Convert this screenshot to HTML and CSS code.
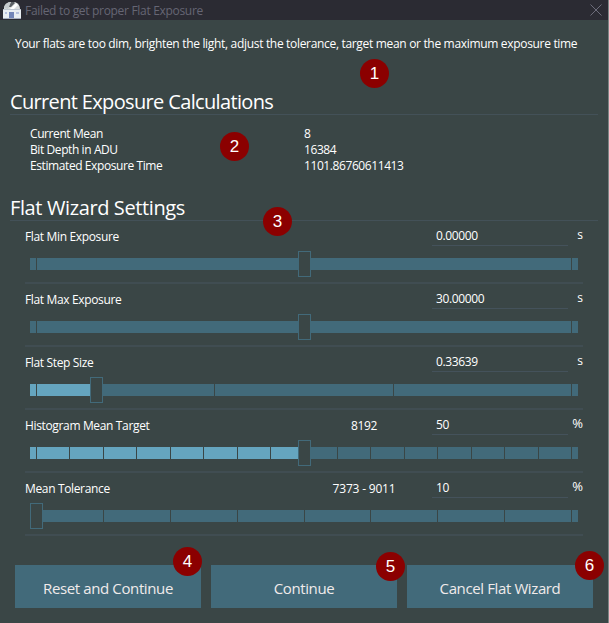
FILE: index.html
```html
<!DOCTYPE html>
<html lang="en">
<head>
<meta charset="utf-8">
<title>Failed to get proper Flat Exposure</title>
<link rel="stylesheet" href="styles.css">
</head>
<body>
<div class="window">
  <header class="titlebar">
    <svg class="app-icon" width="18" height="19" viewBox="0 0 18 19">
      <path d="M1 9V6Q2 2 7 1H12Q17 3 17 8V9Z" fill="#d9dcdd"/>
      <path d="M1 7Q2 3 6 1L8 3L5 8Z" fill="#c5c9cd"/>
      <path d="M7 8L13 2L15 4L11 8Z" fill="#fff"/>
      <path d="M8 1L11 1L12 2L8 6H6Z" fill="#5c6065"/>
      <path d="M0 8H18V18H0Z" fill="#e9edf2"/>
      <path d="M0 8H18V9H0Z" fill="#bfc6d0"/>
      <path d="M6 11H11V17H6Z" fill="#7385b8"/>
      <path d="M2 11H4V13H2ZM13 11H16V13H13Z" fill="#b6c1df"/>
      <path d="M0 17H18V18H0Z" fill="#a5acbd"/>
    </svg>
    <h1 class="title">Failed to get proper Flat Exposure</h1>
    <svg class="close" width="12" height="12" viewBox="0 0 12 12"><path d="M.5 .5L11.5 11.5M11.5 .5L.5 11.5" stroke="#6c6c7a" fill="none"/></svg>
  </header>

  <p class="message">Your flats are too dim, brighten the light, adjust the tolerance, target mean or the maximum exposure time</p>

  <h2 class="heading calc-heading">Current Exposure Calculations</h2>
  <dl class="facts">
    <dt>Current Mean</dt><dd>8</dd>
    <dt>Bit Depth in ADU</dt><dd>16384</dd>
    <dt>Estimated Exposure Time</dt><dd>1101.86760611413</dd>
  </dl>

  <h2 class="heading wizard-heading">Flat Wizard Settings</h2>
  <section class="settings">
    <div class="row">
      <div class="fields"><span class="label">Flat Min Exposure</span><span class="range"></span><span class="input">0.00000</span><span class="unit">s</span></div>
      <div class="slider"><div class="ticks"><i></i><i></i></div><b class="thumb" style="left:268px"></b></div>
    </div>
    <div class="row">
      <div class="fields"><span class="label">Flat Max Exposure</span><span class="range"></span><span class="input">30.00000</span><span class="unit">s</span></div>
      <div class="slider"><div class="ticks"><i></i><i></i></div><b class="thumb" style="left:268px"></b></div>
    </div>
    <div class="row">
      <div class="fields"><span class="label">Flat Step Size</span><span class="range"></span><span class="input">0.33639</span><span class="unit">s</span></div>
      <div class="slider"><div class="fill" style="width:60px"></div><div class="ticks"><i></i><i></i><i></i><i></i></div><b class="thumb" style="left:60px"></b></div>
    </div>
    <div class="row">
      <div class="fields"><span class="label">Histogram Mean Target</span><span class="range">8192</span><span class="input">50</span><span class="unit percent">%</span></div>
      <div class="slider"><div class="fill" style="width:268px"></div><div class="ticks"><i></i><i></i><i></i><i></i><i></i><i></i><i></i><i></i><i></i><i></i><i></i><i></i><i></i><i></i><i></i><i></i><i></i></div><b class="thumb" style="left:268px"></b></div>
    </div>
    <div class="row">
      <div class="fields"><span class="label">Mean Tolerance</span><span class="range span">7373 - 9011</span><span class="input">10</span><span class="unit percent">%</span></div>
      <div class="slider"><div class="ticks"><i></i><i></i><i></i><i></i><i></i><i></i><i></i><i></i><i></i></div><b class="thumb" style="left:0px"></b></div>
    </div>
  </section>

  <footer class="actions">
    <button>Reset and Continue</button>
    <button>Continue</button>
    <button>Cancel Flat Wizard</button>
  </footer>

  <span class="badge n1">1</span>
  <span class="badge n2">2</span>
  <span class="badge n3">3</span>
  <span class="badge n4">4</span>
  <span class="badge n5">5</span>
  <span class="badge n6">6</span>
</div>
</body>
</html>
```
FILE: styles.css
```css
* { box-sizing: border-box; margin: 0; padding: 0; }
body { background: #3a4646; }
.window {
  position: relative;
  width: 609px;
  height: 623px;
  overflow: hidden;
  background: #3a4646;
  border-right: 1px solid #7c8585;
  color: #fff;
  font: 12px/16px "Open Sans", "Noto Sans", sans-serif;
  white-space: nowrap;
}
.titlebar { display: flex; align-items: center; height: 20px; padding: 0 6px 0 3px; background: #2b2b33; color: #666674; }
.title { flex: 1; margin-left: 4px; font-size: 12px; font-weight: 400; line-height: 20px; padding-top: 2px; letter-spacing: -.31px; }
.message { margin: 16px 0 0 15px; letter-spacing: -.32px; }
.heading { margin-left: 10px; width: 588px; height: 28px; border-bottom: 1px solid #435158; font-size: 20px; font-weight: 400; line-height: 30px; }
.calc-heading { margin-top: 35px; letter-spacing: -.65px; }
.facts { display: grid; grid-template-columns: 274px 1fr; margin: 11px 0 0 30px; letter-spacing: -.41px; }
.wizard-heading { margin-top: 19px; letter-spacing: -.38px; }
.settings { margin-left: 25px; width: 558px; }
.row { height: 63px; border-bottom: 2px solid #404d52; }
.fields { display: grid; grid-template-columns: 271px 136px 136px 15px; height: 37px; }
.label { padding-top: 8px; letter-spacing: -.35px; }
.range { padding-top: 8px; text-align: center; letter-spacing: -.4px; }
.range.span { letter-spacing: -.2px; }
.input { height: 25px; padding: 7px 0 0 4px; border-bottom: 1px solid #44525b; letter-spacing: -.35px; }
.unit { padding-top: 6px; text-align: right; }
.percent { padding-top: 5px; font-size: 13px; }
.slider { position: relative; width: 548px; height: 12px; margin-left: 5px; background: #426a7a; }
.fill { position: absolute; left: 0; top: 0; height: 12px; background: #65a5bf; }
.ticks { position: relative; display: flex; justify-content: space-between; height: 12px; margin: 0 6px; }
.ticks i { width: 1px; background: #3a4646; }
.thumb { position: absolute; top: -7px; width: 13px; height: 26px; background: #3a4646; border: 1px solid #426a7a; }
.actions { display: flex; gap: 10px; margin: 29px 0 0 15px; }
.actions button { width: 186px; height: 43px; padding-top: 2px; border: 0; background: #426a7a; color: #f0ebeb; font: 15px/43px "Open Sans", "Noto Sans", sans-serif; letter-spacing: -.38px; }
.badge { position: absolute; width: 29px; height: 29px; border-radius: 50%; background: #8b0000; text-align: center; font: 17px/29px "Liberation Sans", sans-serif; }
.n1 { left: 360px; top: 59px; }
.n2 { left: 220px; top: 132px; }
.n3 { left: 263px; top: 207px; }
.n4 { left: 173px; top: 547px; }
.n5 { left: 376px; top: 552px; }
.n6 { left: 575px; top: 551px; }
```
